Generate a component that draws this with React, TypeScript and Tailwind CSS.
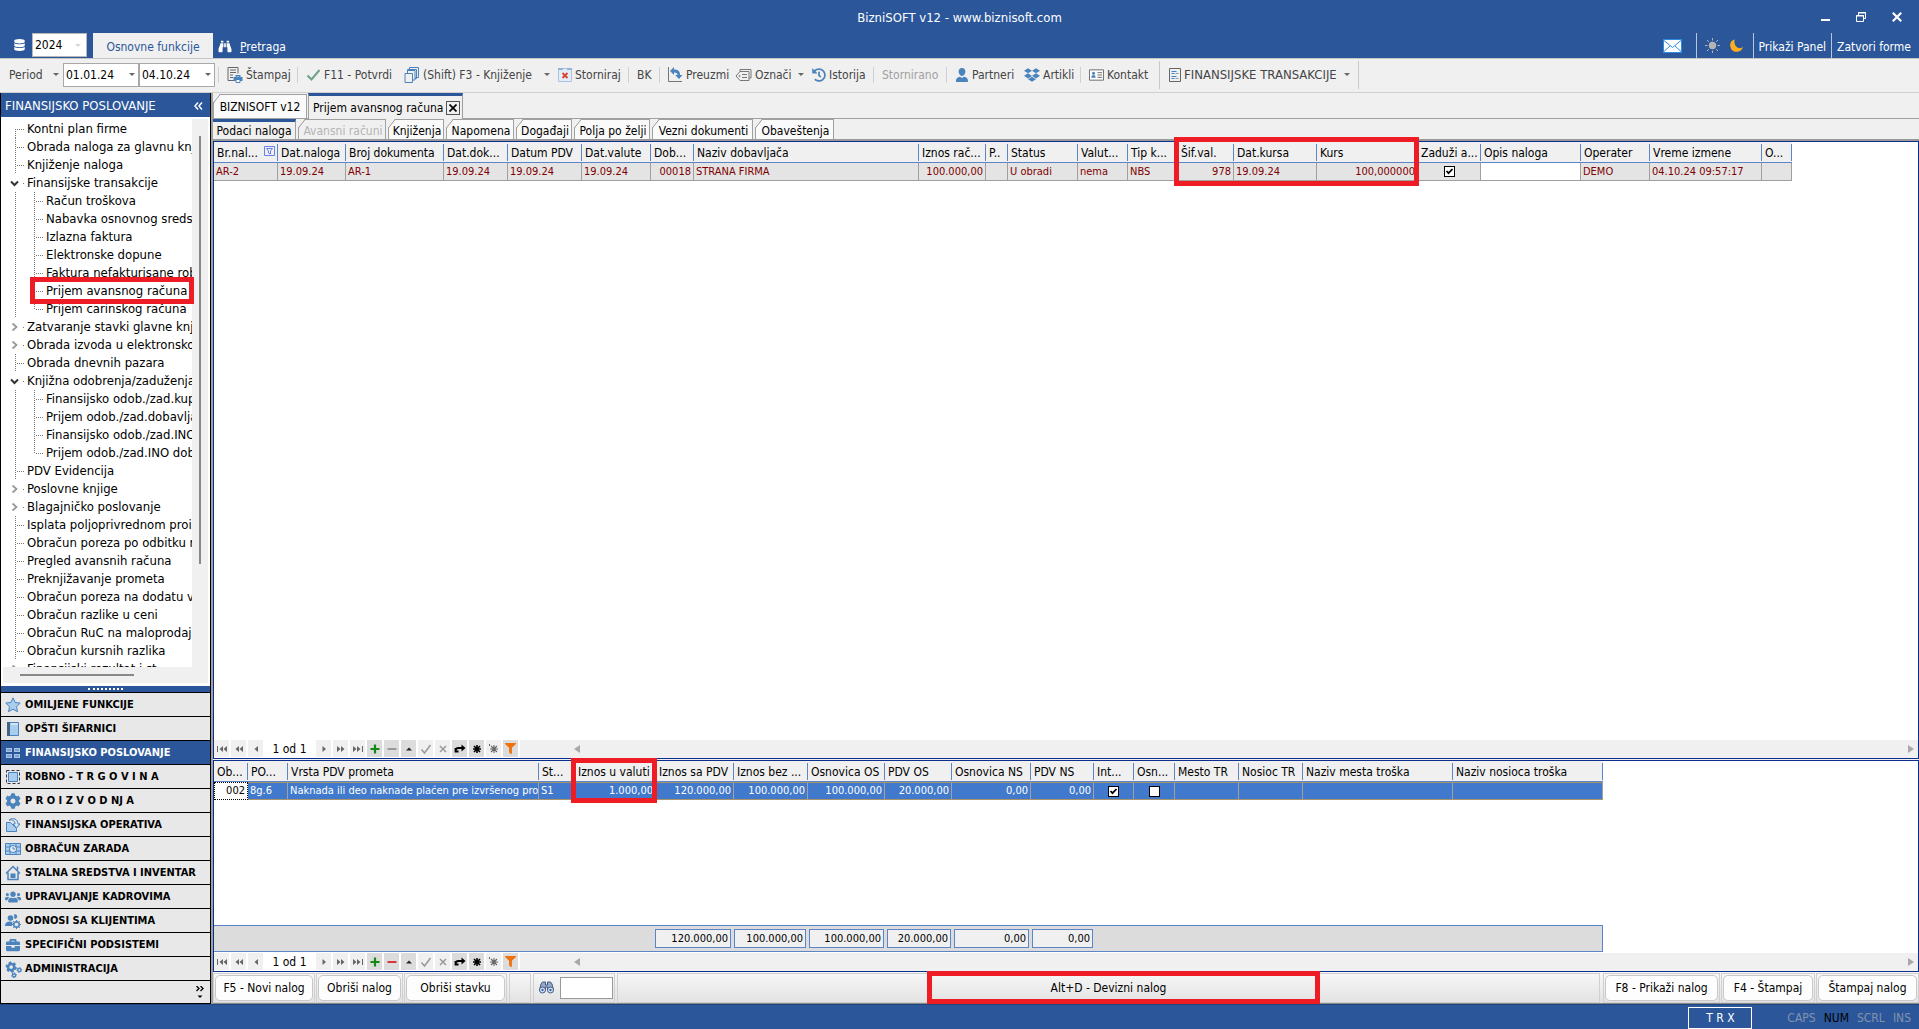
import React from "react";
import type { ReactNode } from "react";
import { FaBinoculars, FaDatabase, FaDropbox, FaHistory, FaMoon, FaFilter, FaCog, FaCogs, FaUsers, FaBriefcase } from "react-icons/fa";

/* ---------- small shared pieces ---------- */

const Caret = ({ className = "" }: { className?: string }) => (
  <svg viewBox="0 0 6 3" className={`h-[3px] w-[6px] shrink-0 ${className}`} fill="currentColor" aria-hidden="true">
    <path d="M0 0h6L3 3z" />
  </svg>
);

const Sep = ({ tall = false }: { tall?: boolean }) => (
  <span className={tall ? "mr-[9px] h-7 w-px shrink-0 bg-[#c8c8c8]" : "mr-[8px] h-4 w-px shrink-0 bg-[#d0d0d0]"} />
);

function Tool({ icon, label, width, caret, muted }: { icon?: ReactNode; label: string; width: string; caret?: boolean; muted?: boolean }) {
  return (
    <button type="button" className={`flex h-7 shrink-0 items-center whitespace-nowrap ${width} ${muted ? "text-[#a0a0a0]" : "text-[#444]"}`}>
      {icon && <span className="mr-[3px] flex shrink-0 items-center">{icon}</span>}
      {label}
      {caret && <Caret className="mr-2 ml-auto text-[#666]" />}
    </button>
  );
}

function Check({ checked, label }: { checked: boolean; label: string }) {
  return (
    <span className="relative mx-auto flex h-[11px] w-[11px]">
      <input type="checkbox" defaultChecked={checked} aria-label={label} className="h-[11px] w-[11px] appearance-none border border-black bg-white" />
      {checked && (
        <svg viewBox="0 0 11 11" className="pointer-events-none absolute inset-0 h-[11px] w-[11px]" aria-hidden="true">
          <path d="M2.500 5l2 2.200L8.500 3" stroke="#000" strokeWidth="1.800" fill="none" />
        </svg>
      )}
    </span>
  );
}

/* ---------- toolbar icons ---------- */

const PrintIcon = () => (
  <svg viewBox="0 0 16 16" className="h-4 w-4" fill="none" aria-hidden="true">
    <path d="M7 13.500H1V.500h10v6M3 3h6M3 5.500h6M3 8h3M3 10.500h3" stroke="#666" />
    <path d="M8.500 8h5v2h2v4h-9v-4h2z" fill="#4b83bd" />
    <path d="M9.500 9h3v1.500h-3zM9 12.500h4v3H9z" fill="#fff" stroke="#4b83bd" />
  </svg>
);
const CheckIcon = () => (
  <svg viewBox="0 0 14 12" className="h-3 w-[15px]" fill="none" aria-hidden="true">
    <path d="M1 6.500l4 4L13 1" stroke="#6fa287" strokeWidth="2" />
  </svg>
);
const CopiesIcon = () => (
  <svg viewBox="0 0 16 16" className="h-4 w-4" fill="none" stroke="#4b83bd" aria-hidden="true">
    <path d="M1 6.500h7.500v9H1zM3.500 6V3.500h7.500v9.500H9M5.500 3V.500h9v10H11.500M7.500 3.500h0" />
    <path d="M3.500 4.500V2.500h9v9h-1.500" />
  </svg>
);
const StornoIcon = () => (
  <svg viewBox="0 0 14 14" className="h-[14px] w-[14px]" fill="none" aria-hidden="true">
    <path d="M.5 .5h13v13H.5z" fill="#e3edf7" stroke="#a9c4e0" />
    <path d="M0 0h5v2H0zM9 0h5v2H9z" fill="#8fb3d9" />
    <path d="M4.500 5l5 5M9.500 5l-5 5" stroke="#d9452b" strokeWidth="1.800" />
  </svg>
);
const TakeIcon = () => (
  <svg viewBox="0 0 15 15" className="h-[15px] w-[15px]" aria-hidden="true">
    <path d="M.5 0v14.500H14" fill="none" stroke="#777" />
    <path d="M2 4l4-4v2.500c4 0 6 1.500 6 5.500h2.500l-3.500 4-3.800-4H9.500C9.500 6.500 8.500 5.500 6 5.500V8z" fill="#4b83bd" />
  </svg>
);
const TagIcon = () => (
  <svg viewBox="0 0 17 12" className="h-3 w-[17px]" fill="none" stroke="#777" aria-hidden="true">
    <path d="M5 2.500h9v9H5L1 7zM5 2.500V.500h11v8.500h-2M7 5.500h5M7 8.500h5" />
    <circle cx="4.500" cy="7" r=".6" />
  </svg>
);
const PersonIcon = () => (
  <svg viewBox="0 0 14 14" className="h-[14px] w-[14px]" fill="#4b83bd" aria-hidden="true">
    <path d="M7 0c2.200 0 3.400 1.500 3.400 3.600S9 8 7 8 3.600 5.700 3.600 3.600 4.800 0 7 0zM1 14c0-3 .5-4.500 4-5.200L7 10l2-1.200c3.500.7 4 2.200 4 5.200z" />
  </svg>
);
const CardIcon = () => (
  <svg viewBox="0 0 16 12" className="h-3 w-[15px]" aria-hidden="true">
    <path d="M.5.5h15v11H.5z" fill="#fff" stroke="#666" />
    <circle cx="4.800" cy="4" r="1.600" fill="#4b83bd" />
    <path d="M2.500 9c0-2 .8-3 2.300-3S7 7 7 9z" fill="#4b83bd" />
    <path d="M9 3.500h5M9 6h5M9 8.500h5" stroke="#666" />
  </svg>
);
const ListIcon = () => (
  <svg viewBox="0 0 12 14" className="h-[14px] w-3" fill="none" aria-hidden="true">
    <path d="M.5.5h11v13H.5z" stroke="#666" />
    <path d="M2.500 3.500h5M2.500 5.500h3M2.500 8.500h5M2.500 10.500h3" stroke="#3b86d1" />
    <path d="M6.500 5.500h3M6.500 10.500h3" stroke="#999" />
  </svg>
);

/* ---------- ribbon ---------- */

function Header() {
  return (
    <header className="flex h-[59px] shrink-0 flex-col border-b border-[#c6c6c6] bg-[#2b579a] text-xs text-white">
      <div className="grid h-[33px] grid-cols-[1fr_auto_1fr] items-center">
        <span />
        <h1 className="pt-[2px] text-[13px]">BizniSOFT v12 - www.biznisoft.com</h1>
        <div className="flex items-center justify-end gap-[26px] pr-[17px]">
          <button type="button" aria-label="Minimize" className="pt-[7px]">
            <svg viewBox="0 0 9 2" className="h-[2px] w-[9px]"><path d="M0 0h9v2H0z" fill="#fff" /></svg>
          </button>
          <button type="button" aria-label="Restore">
            <svg viewBox="0 0 10 10" className="h-[10px] w-[10px]" fill="none" stroke="#fff">
              <path d="M.5 3.500h7v6h-7zM2.500 3V.500h7v6H8" />
              <path d="M0 4h8M2 1h8" />
            </svg>
          </button>
          <button type="button" aria-label="Close">
            <svg viewBox="0 0 10 10" className="h-[10px] w-[10px]" stroke="#fff" strokeWidth="2.200"><path d="M.8.8l8.400 8.400M9.200.8L.8 9.200" /></svg>
          </button>
        </div>
      </div>
      <div className="flex h-[25px] items-stretch">
        <FaDatabase className="mt-1.5 ml-[14px] h-3 w-[11px]" />
        <label className="ml-[7px] flex h-6 w-[55px] items-center border border-[#b8b8b8] bg-white pl-[2px] text-black">
          <input aria-label="Year" defaultValue="2024" className="w-10 pb-px text-xs outline-none" />
          <Caret className="text-[#d8d8d8]" />
        </label>
        <button type="button" className="ml-1.5 flex w-[120px] items-center justify-center bg-[#f0f0f0] pt-[2px] text-[#2b579a]">Osnovne funkcije</button>
        <button type="button" className="ml-[5px] flex items-center gap-2 pt-[2px]">
          <FaBinoculars className="h-[13px] w-[14px]" />
          <span><u>P</u>retraga</span>
        </button>
        <div className="ml-auto flex items-stretch">
          <button type="button" aria-label="Mail" className="mr-[14px] flex items-center">
            <svg viewBox="0 0 19 14" className="h-[14px] w-[19px]" aria-hidden="true">
              <path d="M0 0h19v14H0z" fill="#2b8be0" />
              <path d="M1 1h17v12H1z" fill="#fff" />
              <path d="M1 1.500l8.500 7 8.500-7M1 12.500L7 7M18 12.500L12 7" stroke="#2b8be0" fill="none" />
            </svg>
          </button>
          <span className="w-px bg-[#b8c6dc]" />
          <button type="button" aria-label="Light theme" className="ml-2 flex items-center">
            <svg viewBox="0 0 15 15" className="h-[15px] w-[15px]" aria-hidden="true">
              <circle cx="7.500" cy="7.500" r="3.700" fill="#b4b4b4" />
              <path d="M7.500 0v2.500M7.500 12.500V15M0 7.500h2.500M12.500 7.500H15M2 2l1.800 1.800M11.200 11.200L13 13M13 2l-1.800 1.800M3.800 11.200L2 13" stroke="#b4b4b4" />
            </svg>
          </button>
          <button type="button" aria-label="Dark theme" className="mr-[10px] ml-[10px] flex items-center">
            <svg viewBox="0 0 13 13" className="h-[13px] w-[13px]" aria-hidden="true">
              <path d="M4.500.5A6.300 6.300 0 1 0 12.800 7.500 5 5 0 0 1 7.500 9.800C3.800 9.300 2.800 3.500 4.500.5zM9 2.500v1.500M8.300 3.200h1.500" fill="#fcae1e" />
              <path d="M4.500.5C.5 2-.5 7 2 10s7.500 3.500 10.500-1C8 10.500 3.500 7 4.500.5z" fill="#fcae1e" />
            </svg>
          </button>
          <span className="w-px bg-[#b8c6dc]" />
          <button type="button" className="px-[5px] pt-[2px]">Prikaži Panel</button>
          <span className="w-px bg-[#b8c6dc]" />
          <button type="button" className="pt-[2px] pr-2 pl-[5px]">Zatvori forme</button>
        </div>
      </div>
    </header>
  );
}

function DateField({ value, label }: { value: string; label: string }) {
  return (
    <label className="flex h-6 w-[76px] shrink-0 items-center border border-[#a8a8a8] bg-white pr-[3px] pl-[2px] text-black">
      <input aria-label={label} defaultValue={value} className="w-full min-w-0 text-xs outline-none" />
      <Caret className="text-[#666]" />
    </label>
  );
}

function Toolbar() {
  return (
    <div className="flex h-[34px] shrink-0 items-center border-b border-[#d0d0d0] bg-[#f0f0f0] pb-[2px] text-xs">
      <button type="button" className="flex w-[63px] shrink-0 items-center pr-1 pl-[9px] text-[#444]">
        Period <Caret className="ml-auto text-[#666]" />
      </button>
      <DateField label="Period od" value="01.01.24" />
      <DateField label="Period do" value="04.10.24" />
      <span className="w-[3px]" />
      <Sep />
      <Tool width="w-[70px]" icon={<PrintIcon />} label="Štampaj" />
      <Sep />
      <Tool width="w-[98px]" icon={<CheckIcon />} label="F11 - Potvrdi" />
      <Tool width="w-[154px]" icon={<CopiesIcon />} label="(Shift) F3 - Knjiženje" caret />
      <Tool width="w-[70px]" icon={<StornoIcon />} label="Storniraj" />
      <Sep />
      <Tool width="w-[22px]" label="BK" />
      <Sep />
      <Tool width="w-[67px]" icon={<TakeIcon />} label="Preuzmi" />
      <Tool width="w-[77px]" icon={<TagIcon />} label="Označi" caret />
      <Tool width="w-[61px]" icon={<FaHistory className="h-[14px] w-[14px] text-[#4b83bd]" />} label="Istorija" />
      <Sep />
      <Tool width="w-[64px]" label="Stornirano" muted />
      <Sep />
      <Tool width="w-[69px]" icon={<PersonIcon />} label="Partneri" />
      <Tool width="w-[56px]" icon={<FaDropbox className="h-4 w-4 text-[#4b83bd]" />} label="Artikli" />
      <Sep />
      <Tool width="w-[70px]" icon={<CardIcon />} label="Kontakt" />
      <Sep tall />
      <span className="flex text-[13px]">
        <Tool width="w-[189px]" icon={<ListIcon />} label="FINANSIJSKE TRANSAKCIJE" caret />
      </span>
      <Sep tall />
    </div>
  );
}

/* ---------- sidebar ---------- */

type NodeKind = "leaf" | "open" | "closed" | "child" | "lastChild";

const TREE: [NodeKind, string][] = [
  ["leaf", "Kontni plan firme"],
  ["leaf", "Obrada naloga za glavnu knj"],
  ["leaf", "Knjiženje naloga"],
  ["open", "Finansijske transakcije"],
  ["child", "Račun troškova"],
  ["child", "Nabavka osnovnog sredst"],
  ["child", "Izlazna faktura"],
  ["child", "Elektronske dopune"],
  ["child", "Faktura nefakturisane rob"],
  ["child", "Prijem avansnog računa"],
  ["lastChild", "Prijem carinskog računa"],
  ["closed", "Zatvaranje stavki glavne knjig"],
  ["closed", "Obrada izvoda u elektronskom"],
  ["leaf", "Obrada dnevnih pazara"],
  ["open", "Knjižna odobrenja/zaduženja"],
  ["child", "Finansijsko odob./zad.kup"],
  ["child", "Prijem odob./zad.dobavlja"],
  ["child", "Finansijsko odob./zad.INO"],
  ["lastChild", "Prijem odob./zad.INO dob"],
  ["leaf", "PDV Evidencija"],
  ["closed", "Poslovne knjige"],
  ["closed", "Blagajničko poslovanje"],
  ["leaf", "Isplata poljoprivrednom proiz"],
  ["leaf", "Obračun poreza po odbitku n"],
  ["leaf", "Pregled avansnih računa"],
  ["leaf", "Preknjižavanje prometa"],
  ["leaf", "Obračun poreza na dodatu vr"],
  ["leaf", "Obračun razlike u ceni"],
  ["leaf", "Obračun RuC na maloprodaj"],
  ["leaf", "Obračun kursnih razlika"],
  ["closed", "Finansijski rezultat i st"],
];

function TreeGlyph({ kind, first }: { kind: NodeKind; first: boolean }) {
  const child = kind === "child" || kind === "lastChild";
  const dots = { stroke: "#777", strokeDasharray: "1 1", fill: "none" };
  return (
    <svg width={child ? 45 : 26} height="18" className="shrink-0" aria-hidden="true">
      {kind === "leaf" && <path d={first ? "M14.500 9v9M16 9.500h7" : "M14.500 0v18M16 9.500h7"} {...dots} />}
      {child && <path d={kind === "child" ? "M14.500 0v18M33.500 0v18M35 9.500h7" : "M14.500 0v18M33.500 0v9M35 9.500h7"} {...dots} />}
      {kind === "open" && <path d="M10 7.500l3.500 3.500L17 7.500" stroke="#333" strokeWidth="2" fill="none" />}
      {kind === "closed" && <path d="M11.500 5.500l4 3.500-4 3.500" stroke="#999" strokeWidth="1.800" fill="none" />}
      {(kind === "open" || kind === "closed") && <path d="M22 9.500h1" stroke="#777" />}
    </svg>
  );
}

function Tree() {
  return (
    <div className="relative flex min-h-0 flex-1 flex-col bg-white">
      <div className="flex min-h-0 flex-1 pt-[2px]">
        <ul className="min-w-0 flex-1 overflow-hidden pt-px text-[13px] leading-[18px] text-black">
          {TREE.map(([kind, text], i) => (
            <li key={text}>
              <button type="button" className="flex h-[18px] items-center whitespace-nowrap">
                <TreeGlyph kind={kind} first={i === 0} />
                {text}
              </button>
            </li>
          ))}
        </ul>
        <div className="mr-[2px] flex w-4 shrink-0 justify-center bg-[#f0f0f0] pt-[17px] pb-[103px]">
          <span className="w-[2px] bg-[#888]" />
        </div>
      </div>
      <div className="mr-[2px] mb-[3px] ml-[2px] flex h-4 items-center bg-[#f0f0f0] pl-[17px]">
        <span className="h-[2px] w-[114px] bg-[#888]" />
      </div>
      <div className="pointer-events-none absolute top-[160px] right-4 left-[29px] h-[27px] border-5 border-[#ee1c25]" />
    </div>
  );
}

const B = "#4b83bd";
const L = "#a9cdee";
const svgBox = "h-4 w-4";

const MODULES: { label: string; icon: ReactNode; active?: boolean }[] = [
  { label: "OMILJENE FUNKCIJE", icon: <svg viewBox="0 0 16 16" className={svgBox}><path d="M8 .8l2.200 4.700 5 .6-3.700 3.500 1 5.100L8 12.200l-4.500 2.500 1-5.100L.8 6.100l5-.6z" fill={L} stroke={B} /></svg> },
  { label: "OPŠTI ŠIFARNICI", icon: <svg viewBox="0 0 16 16" className={svgBox}><path d="M2.500 1.500h11v13h-11z" fill={L} stroke={B} /><path d="M2 1h3v14H2z" fill="#44617f" /><path d="M6 3h7" stroke="#fff" /></svg> },
  { label: "FINANSIJSKO POSLOVANJE", active: true, icon: <svg viewBox="0 0 16 16" className={svgBox}><path d="M1 3h6v4H1zM9 3h6v4H9zM1 9h6v4H1zM9 9h6v4H9z" fill="#a9c4e4" /><path d="M2 5h4M10 5h4M2 11h4M10 11h4" stroke={B} /></svg> },
  { label: "ROBNO - T R G O V I N A", icon: <svg viewBox="0 0 16 16" className={svgBox}><path d="M1.500 1.500h13v13h-13z" fill="none" stroke="#334" strokeDasharray="3 2" /><path d="M3.500 3.500h9v9h-9z" fill={L} stroke={B} /></svg> },
  { label: "P R O I Z V O D NJ A", icon: <FaCog className="h-4 w-4 text-[#4b83bd]" /> },
  { label: "FINANSIJSKA OPERATIVA", icon: <svg viewBox="0 0 16 16" className={svgBox}><path d="M1.500 5.500h4l6 6v3h-10z" fill={L} stroke={B} /><path d="M4 3c4-3 9-1 9 4h2l-3.500 4L8 7h2c0-3-2-4.500-6-4z" fill="#d5e6f6" stroke={B} /></svg> },
  { label: "OBRAČUN ZARADA", icon: <svg viewBox="0 0 16 16" className={svgBox}><path d="M.5 2.500h15v11H.5z" fill={L} stroke={B} /><path d="M1 6h14M1 10h14M5 3v10M11 3v10" stroke={B} /><circle cx="8" cy="8" r="3.500" fill="#e8f1fa" stroke={B} /><path d="M8 6v2h2" stroke={B} fill="none" /></svg> },
  { label: "STALNA SREDSTVA I INVENTAR", icon: <svg viewBox="0 0 16 16" className={svgBox}><path d="M1 8.500L8 1.500l7 7M3 7.500v7h10v-7M12.500 5V1.500" fill="none" stroke={B} strokeWidth="1.500" /><path d="M5.500 8.500h5V13h-5z" fill={B} /></svg> },
  { label: "UPRAVLJANJE KADROVIMA", icon: <FaUsers className="h-4 w-4 text-[#4b83bd]" /> },
  { label: "ODNOSI SA KLIJENTIMA", icon: <svg viewBox="0 0 16 16" className={svgBox} fill={B}><circle cx="5.500" cy="5" r="2.800" /><path d="M0 13c0-3 1.500-4.500 5-4.500 1 0 2 .2 2.500.5L7 13zM9 1.500a2.200 2.200 0 0 1 2 4l-1.500.5z" /><circle cx="11.500" cy="11.500" r="2.800" fill="none" stroke={B} strokeWidth="1.500" /><path d="M11.500 7v9M7 11.500h9M8.300 8.300l6.400 6.400M14.700 8.300l-6.400 6.400" stroke={B} /><circle cx="11.500" cy="11.500" r="1.800" fill="#e8e8e8" /></svg> },
  { label: "SPECIFIČNI PODSISTEMI", icon: <FaBriefcase className="h-[14px] w-4 text-[#4b83bd]" /> },
  { label: "ADMINISTRACIJA", icon: <FaCogs className="h-4 w-4 rotate-45 text-[#4b83bd]" /> },
];

function Sidebar() {
  return (
    <aside className="flex w-[211px] shrink-0 flex-col border-x border-black bg-white">
      <div className="flex h-6 shrink-0 items-center justify-between bg-[#2b579a] pt-px pr-[7px] pl-1 text-[13px] text-white">
        <h2>FINANSIJSKO POSLOVANJE</h2>
        <button type="button" aria-label="Collapse">
          <svg viewBox="0 0 9 8" className="h-2 w-[9px]" fill="none" stroke="#fff" strokeWidth="1.500"><path d="M4 .5L1 4l3 3.500M8 .5L5 4l3 3.500" /></svg>
        </button>
      </div>
      <Tree />
      <div className="flex h-1.5 shrink-0 items-center justify-center bg-[#2b579a]">
        <span className="w-[35px] border-t-2 border-dotted border-white" />
      </div>
      <nav className="shrink-0 border-b border-black">
        {MODULES.map((m) => (
          <button
            key={m.label}
            type="button"
            className={`flex h-6 w-full items-center gap-1 border-t border-black pl-1 text-[11px] font-bold whitespace-nowrap ${m.active ? "bg-[#2b579a] text-white" : "bg-[#e8e8e8] text-black"}`}
          >
            {m.icon}
            <span className="pt-px">{m.label}</span>
          </button>
        ))}
        <div className="flex h-[23px] items-center justify-end border-t border-black bg-[#e8e8e8] pr-1.5">
          <button type="button" aria-label="More modules">
            <svg viewBox="0 0 8 12" className="h-3 w-2" fill="none" stroke="#000"><path d="M.5 0L3 2.500.5 5M4.500 0L7 2.500 4.500 5" strokeWidth="1.300" /><path d="M1.500 9.500h5L4 12z" fill="#000" stroke="none" /></svg>
          </button>
        </div>
      </nav>
    </aside>
  );
}

/* ---------- tabs ---------- */

const Notch = () => (
  <svg viewBox="0 0 8 10" className="absolute -top-px -left-px h-[10px] w-2" aria-hidden="true">
    <path d="M0 0h7L0 9z" fill="#f0f0f0" />
    <path d="M0 9.500L7.500 0" stroke="#999" fill="none" />
  </svg>
);

const SUBTABS: { label: string; width: string; state?: "active" | "disabled" }[] = [
  { label: "Podaci naloga", width: "w-[83px]", state: "active" },
  { label: "Avansni računi", width: "w-[88px]", state: "disabled" },
  { label: "Knjiženja", width: "w-[56px]" },
  { label: "Napomena", width: "w-[68px]" },
  { label: "Događaji", width: "w-[56px]" },
  { label: "Polja po želji", width: "w-[76px]" },
  { label: "Vezni dokumenti", width: "w-[101px]" },
  { label: "Obaveštenja", width: "w-[79px]" },
];

function Tabs() {
  return (
    <>
      <div className="flex h-[26px] shrink-0 items-end border-b border-[#a0a0a0] pt-px text-xs text-black">
        <button type="button" className="relative flex h-full w-[94px] items-center justify-center border border-b-0 border-[#a0a0a0] bg-[#fafafa] pt-px whitespace-nowrap"><Notch />BIZNISOFT v12</button>
        <div className="relative -mb-px ml-px flex h-[26px] w-[155px] items-center border-x border-t-3 border-[#a0a0a0] border-t-[#2b579a] bg-[#f0f0f0] pl-1">
          <button type="button" className="whitespace-nowrap">Prijem avansnog računa</button>
          <button type="button" aria-label="Close tab" className="mr-[2px] ml-auto flex h-[14px] w-[14px] items-center justify-center border border-[#555]">
            <svg viewBox="0 0 8 8" className="h-2 w-2" stroke="#000" strokeWidth="1.700"><path d="M.5.5l7 7M7.500.5l-7 7" /></svg>
          </button>
        </div>
      </div>
      <div className="flex h-[22px] shrink-0 gap-[2px] border-b-2 border-[#999] text-xs text-black">
        {SUBTABS.map((t) => (
          <button
            key={t.label}
            type="button"
            disabled={t.state === "disabled"}
            className={`relative flex items-center justify-center border-r border-[#a0a0a0] whitespace-nowrap ${t.width} ${
              t.state === "active" ? "border-t-3 border-t-[#2b579a] bg-[#f0f0f0]" : t.state === "disabled" ? "border-t border-l bg-[#f0f0f0] pt-[2px] pl-[2px] text-[#b4b4b4]" : "border-t border-l bg-[#fafafa] pt-[2px] pl-[2px]"
            }`}
          >
            {t.state !== "active" && <Notch />}
            {t.label}
          </button>
        ))}
      </div>
    </>
  );
}

/* ---------- grids ---------- */

type Column = { head: string; value: ReactNode; width: number; right?: boolean };

const ORDERS: Column[] = [
  { head: "Br.nal...", value: "AR-2", width: 64 },
  { head: "Dat.naloga", value: "19.09.24", width: 68 },
  { head: "Broj dokumenta", value: "AR-1", width: 98 },
  { head: "Dat.dok...", value: "19.09.24", width: 64 },
  { head: "Datum PDV", value: "19.09.24", width: 74 },
  { head: "Dat.valute", value: "19.09.24", width: 69 },
  { head: "Dob...", value: "00018", width: 43, right: true },
  { head: "Naziv dobavljača", value: "STRANA FIRMA", width: 225 },
  { head: "Iznos rač...", value: "100.000,00", width: 67, right: true },
  { head: "P..", value: "", width: 22 },
  { head: "Status", value: "U obradi", width: 70 },
  { head: "Valut...", value: "nema", width: 50 },
  { head: "Tip k...", value: "NBS", width: 50 },
  { head: "Šif.val.", value: "978", width: 56, right: true },
  { head: "Dat.kursa", value: "19.09.24", width: 83 },
  { head: "Kurs", value: "100,000000", width: 101, right: true },
  { head: "Zaduži a...", value: <Check checked label="Zaduži" />, width: 63 },
  { head: "Opis naloga", value: "", width: 100 },
  { head: "Operater", value: "DEMO", width: 69 },
  { head: "Vreme izmene", value: "04.10.24 09:57:17", width: 112 },
  { head: "O...", value: "", width: 30 },
];

const ITEMS: Column[] = [
  { head: "Ob...", value: "002", width: 34, right: true },
  { head: "PO...", value: "8g.6", width: 40 },
  { head: "Vrsta PDV prometa", value: "Naknada ili deo naknade plaćen pre izvršenog prom", width: 251 },
  { head: "St...", value: "S1", width: 36 },
  { head: "Iznos u valuti", value: "1.000,00", width: 81, right: true },
  { head: "Iznos sa PDV", value: "120.000,00", width: 78, right: true },
  { head: "Iznos bez ...", value: "100.000,00", width: 74, right: true },
  { head: "Osnovica OS", value: "100.000,00", width: 77, right: true },
  { head: "PDV OS", value: "20.000,00", width: 67, right: true },
  { head: "Osnovica NS", value: "0,00", width: 79, right: true },
  { head: "PDV NS", value: "0,00", width: 63, right: true },
  { head: "Int...", value: <Check checked label="Interni" />, width: 40 },
  { head: "Osn...", value: <Check checked={false} label="Osnovno" />, width: 41 },
  { head: "Mesto TR", value: "", width: 64 },
  { head: "Nosioc TR", value: "", width: 64 },
  { head: "Naziv mesta troška", value: "", width: 150 },
  { head: "Naziv nosioca troška", value: "", width: 150 },
];

function Grid({ columns, selected, className }: { columns: Column[]; selected?: boolean; className: string }) {
  return (
    <table className={`table-fixed border-separate border-spacing-0 ${className}`}>
      <colgroup>
        {columns.map((c) => (
          <col key={c.head} style={{ width: c.width }} />
        ))}
      </colgroup>
      <thead>
        <tr>
          {columns.map((c, i) => (
            <th key={c.head} className="h-[21px] overflow-hidden border-b border-[#5b85c8] bg-[#f0f0f0] p-0 text-left text-xs font-normal text-black">
              <div className="flex h-[17px] items-center justify-between border-r border-[#5b85c8] pt-px pl-[3px] leading-4 whitespace-nowrap">
                {c.head}
                {!selected && i === 0 && (
                  <svg viewBox="0 0 11 10" className="mr-[2px] mb-1 h-[10px] w-[11px]" fill="none" stroke="#6a7ff0" aria-hidden="true">
                    <path d="M.5.5h10v9H.5zM2.500 2.500h6L6.500 5v3l-2-1V5z" />
                  </svg>
                )}
              </div>
            </th>
          ))}
        </tr>
      </thead>
      <tbody>
        <tr>
          {columns.map((c, i) => {
            const base = "h-[18px] overflow-hidden border-r border-b border-[#a0a0a0] py-0 pr-[2px] pl-[2px] text-[11px] leading-4 whitespace-nowrap";
            const tone = selected
              ? i === 0
                ? "border border-dotted border-black bg-white text-black"
                : "border-t border-t-[#a89468] border-b-[#a89468] bg-[#4179cc] text-white"
              : c.head === "Opis naloga"
                ? "bg-white"
                : "bg-[#e4e4e4] text-[#800000]";
            return (
              <td key={c.head} className={`${base} ${tone} ${c.right ? "text-right" : ""}`}>
                {c.value}
              </td>
            );
          })}
        </tr>
      </tbody>
    </table>
  );
}

/* record navigator under each grid */

const NAV_CELL = "flex h-[17px] w-[15px] items-center justify-center";

function NavButton({ label, raised, children }: { label: string; raised?: boolean; children: ReactNode }) {
  return (
    <button type="button" aria-label={label} className={`${NAV_CELL} ${raised ? "bg-[#dcdcdc]" : "bg-[#f0f0f0]"}`}>
      <svg viewBox="0 0 12 12" className="h-3 w-3" fill="#666">
        {children}
      </svg>
    </button>
  );
}

const STAR = "M6 2v8M2 6h8M3 3l6 6M9 3l-6 6";

function Navigator({ canDelete }: { canDelete?: boolean }) {
  return (
    <div className="flex h-[19px] shrink-0 items-center gap-[2px] bg-white text-xs">
      <NavButton label="First"><path d="M1 3h1v6H1zM7 3v6L3.500 6zM11 3v6L7.500 6z" /></NavButton>
      <NavButton label="Previous page"><path d="M6 3v6L2.500 6zM10 3v6L6.500 6z" /></NavButton>
      <NavButton label="Previous"><path d="M8 3v6L4.500 6z" /></NavButton>
      <span className="w-[49px] text-center text-black">1 od 1</span>
      <NavButton label="Next"><path d="M4.500 3v6L8 6z" /></NavButton>
      <NavButton label="Next page"><path d="M2 3v6l3.500-3zM6 3v6l3.500-3z" /></NavButton>
      <NavButton label="Last"><path d="M1 3v6l3.500-3zM5 3v6l3.500-3zM10 3h1v6h-1z" /></NavButton>
      <NavButton label="Insert" raised><path d="M4.900 1.500h2.200v3.400h3.400v2.200H7.100v3.400H4.900V7.100H1.500V4.900h3.400z" fill="#128a12" /></NavButton>
      <NavButton label="Delete" raised><path d="M1.500 5h9v2h-9z" fill={canDelete ? "#d9363e" : "#999"} /></NavButton>
      <NavButton label="Edit" raised><path d="M3 7.500h6L6 4.500z" fill="#222" /></NavButton>
      <NavButton label="Post"><path d="M1.500 6.500l3 3.500L10.500 2" stroke="#999" strokeWidth="1.500" fill="none" /></NavButton>
      <NavButton label="Cancel"><path d="M3 3l6 6M9 3l-6 6" stroke="#999" strokeWidth="1.500" /></NavButton>
      <NavButton label="Refresh" raised><path d="M1.500 5v3.500h3M1.500 8Q1.500 5 4.500 5H8" stroke="#000" strokeWidth="1.800" fill="none" /><path d="M7.500 1.500V8.500L11.500 5z" fill="#000" /></NavButton>
      <NavButton label="Save bookmark" raised><path d={STAR} stroke="#000" strokeWidth="1.600" /></NavButton>
      <NavButton label="Go to bookmark"><path d={STAR} stroke="#666" strokeWidth="1.100" /><path d="M1.500 1v2" stroke="#666" /></NavButton>
      <button type="button" aria-label="Filter" className={`${NAV_CELL} bg-[#dcdcdc]`}>
        <FaFilter className="h-[11px] w-[11px] text-[#f0700a]" />
      </button>
      <div className="flex h-[18px] flex-1 items-center justify-between bg-[#f0f0f0] pr-1 pl-[54px]">
        <svg viewBox="0 0 6 8" className="h-2 w-1.5" fill="#a8a8a8" aria-hidden="true"><path d="M6 0v8L0 4z" /></svg>
        <svg viewBox="0 0 6 8" className="h-2 w-1.5" fill="#a8a8a8" aria-hidden="true"><path d="M0 0v8l6-4z" /></svg>
      </div>
    </div>
  );
}

const TOTALS: [string, string][] = [
  ["120.000,00", "w-[76px]"],
  ["100.000,00", "w-[72px]"],
  ["100.000,00", "w-[75px]"],
  ["20.000,00", "w-[64px]"],
  ["0,00", "w-[75px]"],
  ["0,00", "w-[61px]"],
];

function Workspace() {
  return (
    <main className="flex min-w-0 flex-1 flex-col border-l-2 border-[#a0a0a0] bg-[#f0f0f0]">
      <Tabs />
      <section aria-label="Nalozi" className="relative flex min-h-0 flex-1 flex-col border border-[#0a2f8f] bg-white">
        <div className="min-h-0 flex-1">
          <Grid columns={ORDERS} className="w-[1578px]" />
        </div>
        <Navigator />
        <div className="pointer-events-none absolute -top-[5px] left-[960px] h-[49px] w-[245px] border-5 border-[#ee1c25]" />
      </section>
      <section aria-label="Stavke" className="relative mt-px flex h-[212px] shrink-0 flex-col border border-[#0a2f8f] bg-white">
        <div className="min-h-0 flex-1">
          <Grid columns={ITEMS} selected className="w-[1389px]" />
        </div>
        <div className="flex h-[27px] w-[1389px] shrink-0 items-center gap-[3px] border border-l-0 border-[#5b85c8] bg-[#dcdcdc] pl-[441px] text-[11px] text-black">
          {TOTALS.map(([t, w], i) => (
            <output key={i} className={`flex h-[19px] items-center justify-end border border-[#5b85c8] bg-[#f0f0f0] pt-px pr-[2px] ${w}`}>
              {t}
            </output>
          ))}
        </div>
        <Navigator canDelete />
        <div className="pointer-events-none absolute -top-[3px] left-[357px] h-[45px] w-[86px] border-5 border-[#ee1c25]" />
      </section>
      <ActionBar />
    </main>
  );
}

function ActionButton({ label, width }: { label: string; width: string }) {
  return (
    <div className="border border-[#d0d0d0] p-px">
      <button type="button" className={`h-[26px] rounded-[5px] border border-[#c8c8c8] bg-[#fdfdfd] pt-px whitespace-nowrap ${width}`}>
        {label}
      </button>
    </div>
  );
}

function ActionBar() {
  return (
    <div className="relative flex h-8 shrink-0 items-center gap-px border-b border-[#888] bg-linear-to-b from-[#f8f8f8] to-[#e2e2e2] text-xs text-black">
      <ActionButton label="F5 - Novi nalog" width="w-[98px]" />
      <ActionButton label="Obriši nalog" width="w-[83px]" />
      <ActionButton label="Obriši stavku" width="w-[99px]" />
      <div className="ml-px h-[30px] w-[22px] border border-[#d0d0d0]" />
      <label className="ml-px flex h-[30px] w-[82px] items-center gap-1.5 border border-[#d0d0d0] pr-px pl-[5px]">
        <svg viewBox="0 0 15 13" className="h-[13px] w-[15px] shrink-0" aria-hidden="true">
          <path d="M2 3l1.500-2h3v3h2V1h3L13 3l1.500 6H8.500V6h-2v3H.5z" fill="#93a9c9" stroke="#44597c" />
          <circle cx="3.500" cy="9" r="3" fill="#d9e8fa" stroke="#44597c" />
          <circle cx="11.500" cy="9" r="3" fill="#d9e8fa" stroke="#44597c" />
          <circle cx="3.500" cy="9" r="1.200" fill="#3567b5" />
          <circle cx="11.500" cy="9" r="1.200" fill="#3567b5" />
        </svg>
        <input aria-label="Pretraga" className="h-[22px] w-full min-w-0 border border-[#999] bg-white px-1 outline-none" />
      </label>
      <button type="button" className="ml-px h-[30px] flex-1 border border-[#d0d0d0] pt-px">Alt+D - Devizni nalog</button>
      <div className="ml-[2px] flex gap-px">
        <ActionButton label="F8 - Prikaži nalog" width="w-[113px]" />
        <ActionButton label="F4 - Štampaj" width="w-[90px]" />
        <ActionButton label="Štampaj nalog" width="w-[99px]" />
      </div>
      <div className="pointer-events-none absolute -top-px right-[599px] h-[33px] w-[393px] border-5 border-[#ee1c25]" />
    </div>
  );
}

function StatusBar() {
  return (
    <footer className="flex h-[25px] shrink-0 items-center justify-end border-t border-[#1f4480] bg-[#2b579a] pt-px text-xs text-[#8292ad]">
      <span className="flex h-[22px] w-[64px] items-center justify-center border border-white text-white">T R X</span>
      <span className="ml-[35px]">CAPS</span>
      <span className="ml-2 text-black">NUM</span>
      <span className="ml-2">SCRL</span>
      <span className="mr-2 ml-2">INS</span>
    </footer>
  );
}

export default function App() {
  return (
    <div className="flex h-screen flex-col overflow-hidden bg-[#f0f0f0] font-['DejaVu_Sans_Condensed','DejaVu_Sans',sans-serif]">
      <Header />
      <Toolbar />
      <div className="flex min-h-0 flex-1">
        <Sidebar />
        <Workspace />
      </div>
      <StatusBar />
    </div>
  );
}
